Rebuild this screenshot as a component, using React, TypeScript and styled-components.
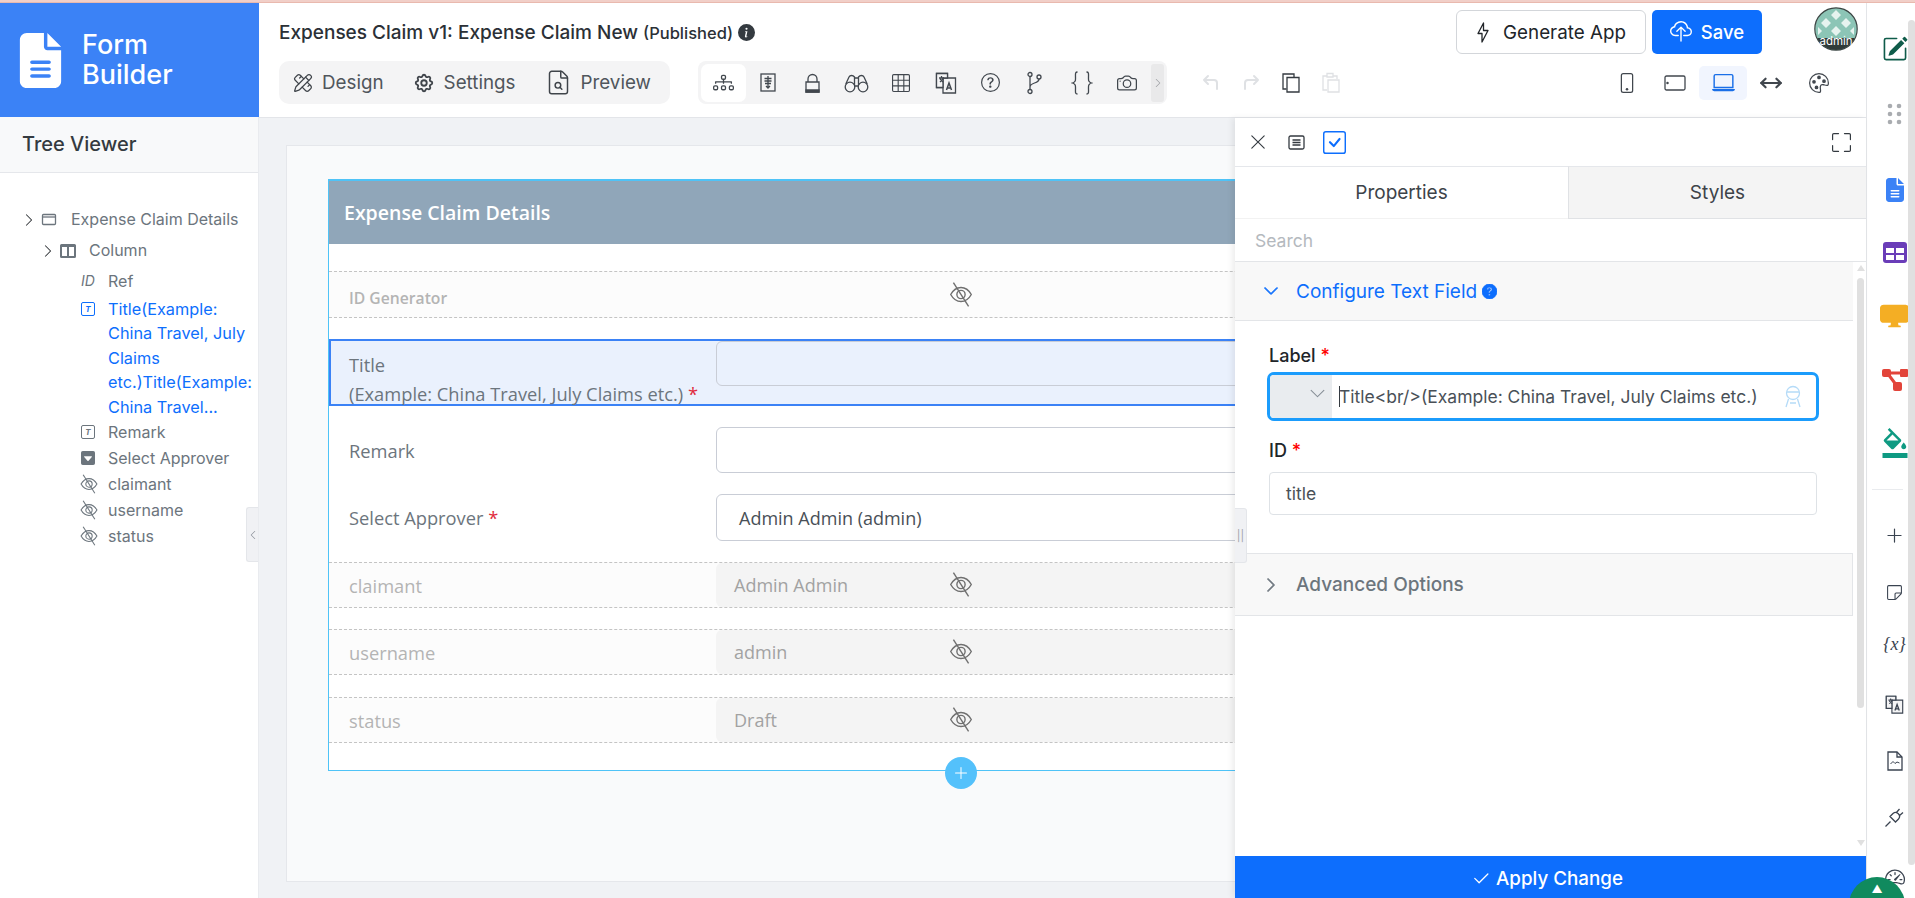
import React from 'react';
import styled, { createGlobalStyle } from 'styled-components';
import { FileSearch, PencilRuler } from 'lucide-react';
import {
  BsCamera,
  BsCaretDownSquareFill,
  BsCheck2,
  BsCheckSquare,
  BsChevronDown,
  BsChevronLeft,
  BsChevronRight,
  BsDiagram3,
  BsDisplayFill,
  BsFullscreen,
  BsGrid3X3,
  BsInfoCircleFill,
  BsLaptop,
  BsPalette,
  BsPencilSquare,
  BsPhone,
  BsPlusLg,
  BsQuestionCircle,
  BsQuestionCircleFill,
  BsSpeedometer2,
  BsSticky,
  BsXLg,
  BsCloudUpload,
} from 'react-icons/bs';
import { TbArrowsHorizontal, TbCornerUpLeft, TbCornerUpRight, TbSettings } from 'react-icons/tb';
import { MdFormatColorFill } from 'react-icons/md';
import { FaFileLines } from 'react-icons/fa6';

const GlobalStyle = createGlobalStyle`
  html, body {
    margin: 0;
    padding: 0;
    background: #fff;
  }
  body {
    font-family: Inter, "Liberation Sans", sans-serif;
    color: #212529;
    overflow: hidden;
  }
  * {
    box-sizing: border-box;
  }
`;

const Page = styled.div`
  position: relative;
  width: 1915px;
  height: 898px;
  overflow: hidden;
  display: flex;
  flex-direction: column;
`;

const TopLine = styled.div`
  height: 3px;
  flex: none;
  background: #f1cfc8;
  border-bottom: 1px solid #e9b9ae;
`;

const Shell = styled.div`
  flex: 1;
  min-height: 0;
  display: flex;
`;

const LeftColumn = styled.aside`
  width: 259px;
  flex: none;
  display: flex;
  flex-direction: column;
  position: relative;
  border-right: 1px solid #e9ebef;
`;

const Logo = styled.div`
  height: 114px;
  margin-right: -1px;
  flex: none;
  background: #3b82f6;
  color: #fff;
  display: flex;
  align-items: center;
  gap: 14px;
  padding-left: 13px;
  font-size: 27px;
  font-weight: 500;
  line-height: 30px;
  svg {
    color: #fff;
  }
`;

const TreeHeader = styled.div`
  height: 56px;
  flex: none;
  padding: 0 0 2px 22px;
  background: #f8f9fa;
  border-bottom: 1px solid #e5e7eb;
  display: flex;
  align-items: center;
  font-size: 20px;
  font-weight: 500;
  color: #343a40;
`;

const Tree = styled.div`
  padding-top: 31px;
  display: flex;
  flex-direction: column;
`;

const TreeRow = styled.div<{ $depth: number; $tall?: boolean; $active?: boolean }>`
  display: flex;
  align-items: ${(p) => (p.$active ? 'flex-start' : 'center')};
  min-height: ${(p) => (p.$tall ? 31 : 26)}px;
  padding-left: ${(p) => p.$depth}px;
  font-size: 16px;
  line-height: 24.4px;
  color: ${(p) => (p.$active ? '#0d6efd' : '#6c757d')};
`;

const TreeCaret = styled.span`
  width: 19px;
  flex: none;
  display: flex;
  color: #212529;
`;

const TreeIcon = styled.span<{ $width: number }>`
  width: ${(p) => p.$width}px;
  height: 24px;
  flex: none;
  display: flex;
  align-items: center;
`;

const TreeLabel = styled.span`
  width: 149px;
  flex: none;
  font-size: 16.3px;
`;

const IdMark = styled.span`
  font-style: italic;
  font-size: 14px;
`;

const TextBox = styled.span`
  width: 14px;
  height: 14px;
  border: 1.5px solid currentColor;
  border-radius: 2px;
  display: flex;
  align-items: center;
  justify-content: center;
  font-size: 8px;
  font-style: italic;
  font-weight: 700;
  line-height: 1;
`;

const CollapseTab = styled.div`
  position: absolute;
  right: 0;
  top: 504px;
  width: 12px;
  height: 55px;
  background: #f0f1f4;
  border: 1px solid #e4e6ea;
  border-right: none;
  border-radius: 3px 0 0 3px;
  color: #8a9099;
  display: flex;
  align-items: center;
  justify-content: center;
`;

const Center = styled.div`
  flex: 1;
  min-width: 0;
  display: flex;
  flex-direction: column;
`;

const Header = styled.header`
  height: 115px;
  flex: none;
  background: #fff;
  border-bottom: 1px solid #e3e5e9;
  padding-left: 20px;
  display: flex;
  flex-direction: column;
`;

const HeaderTop = styled.div`
  height: 58px;
  flex: none;
  display: flex;
  align-items: center;
`;

const Title = styled.h1`
  margin: 0;
  flex: 1;
  display: flex;
  align-items: center;
  gap: 5px;
  font-size: 19px;
  font-weight: 500;
  color: #2b3036;
  small {
    font-size: 16.5px;
    font-weight: 500;
  }
`;

const GenerateButton = styled.button`
  width: 190px;
  height: 44px;
  display: flex;
  align-items: center;
  justify-content: center;
  gap: 13px;
  background: #fff;
  border: 1px solid #d3d6da;
  border-radius: 6px;
  font: 400 18.8px Inter, sans-serif;
  color: #212529;
`;

const SaveButton = styled.button`
  width: 110px;
  height: 44px;
  margin-left: 6px;
  display: flex;
  align-items: center;
  justify-content: center;
  gap: 9px;
  background: #0d6efd;
  border: none;
  border-radius: 5px;
  font: 500 18.5px Inter, sans-serif;
  color: #fff;
`;

const AvatarWrap = styled.div`
  width: 44px;
  height: 44px;
  margin: 0 8px 7px 52px;
  display: flex;
`;

const HeaderBottom = styled.div`
  height: 43px;
  flex: none;
  display: flex;
  align-items: center;
`;

const ModeTabs = styled.div`
  width: 391px;
  height: 43px;
  background: #f4f4f5;
  border-radius: 10px;
  display: flex;
  align-items: center;
  padding-left: 14px;
  gap: 29px;
`;

const ModeTab = styled.span`
  display: flex;
  align-items: center;
  gap: 9px;
  font-size: 18.8px;
  color: #50565c;
  svg {
    color: #3f444a;
  }
`;

const ToolStrip = styled.div`
  margin-left: 28px;
  width: 469px;
  height: 43px;
  background: #f4f4f5;
  border-radius: 8px;
  padding: 3px;
  display: flex;
  align-items: center;
`;

const ToolButton = styled.span<{ $active?: boolean; $shift?: number }>`
  width: 44.5px;
  height: 38px;
  flex: none;
  margin-left: ${(p) => p.$shift ?? 0}px;
  display: flex;
  align-items: center;
  justify-content: center;
  border-radius: 7px;
  background: ${(p) => (p.$active ? '#fff' : 'transparent')};
  color: #41474e;
`;

const ToolMore = styled.span`
  margin-left: auto;
  width: 13px;
  height: 38px;
  background: #e9e9ea;
  border-radius: 3px;
  display: flex;
  align-items: center;
  justify-content: center;
  color: #9a9da1;
`;

const HistoryGroup = styled.div`
  margin-left: 24px;
  display: flex;
  align-items: center;
`;

const HistoryButton = styled.span<{ $muted?: boolean }>`
  width: 40px;
  display: flex;
  justify-content: center;
  color: ${(p) => (p.$muted ? '#dfe1e4' : '#343a40')};
`;

const DeviceGroup = styled.div`
  margin-left: auto;
  margin-right: 23px;
  display: flex;
  align-items: center;
`;

const DeviceButton = styled.span<{ $active?: boolean }>`
  width: 48px;
  height: 34px;
  display: flex;
  align-items: center;
  justify-content: center;
  border-radius: 5px;
  background: ${(p) => (p.$active ? '#f1f5fe' : 'transparent')};
  color: ${(p) => (p.$active ? '#1a6fe8' : '#41474e')};
`;

const Workspace = styled.main`
  flex: 1;
  min-height: 0;
  position: relative;
  background: #f0f2f5;
  padding: 27px 0 0 27px;
`;

const Canvas = styled.div`
  width: 1350px;
  height: 737px;
  background: #f9fafb;
  border: 1px solid #e5e7eb;
  padding: 33px 41px;
  font-family: "Open Sans", "Liberation Sans", sans-serif;
`;

const FormBox = styled.div`
  position: relative;
  width: 1266px;
  height: 592px;
  background: #fff;
  border: 1px solid #4fc3f7;
  border-top-width: 2px;
`;

const FormHeading = styled.div`
  height: 63px;
  background: #90a6b9;
  color: #fff;
  display: flex;
  align-items: center;
  padding-left: 15px;
  font-size: 19.5px;
  font-weight: 600;
  margin-bottom: 27px;
`;

const Row = styled.div<{ $hidden?: boolean; $selected?: boolean; $height: number; $after?: number }>`
  position: relative;
  height: ${(p) => p.$height}px;
  margin-bottom: ${(p) => p.$after ?? 21}px;
  padding-top: ${(p) => (p.$selected ? 2 : 0)}px;
  display: flex;
  font-size: 18px;
  color: ${(p) => (p.$hidden ? '#b4b4b4' : '#6c757d')};
  background: ${(p) => (p.$selected ? '#eaf1fd' : p.$hidden ? '#fcfcfc' : 'transparent')};
  border-top: ${(p) => (p.$hidden ? '1px dashed #c4c4c4' : 'none')};
  border-bottom: ${(p) => (p.$hidden ? '1px dashed #c4c4c4' : 'none')};
  box-shadow: ${(p) => (p.$selected ? 'inset 2px 2px 0 #3b82f6, inset 0 -2px 0 #3b82f6' : 'none')};
`;

const RowLabel = styled.label<{ $small?: boolean; $stacked?: boolean }>`
  width: 387px;
  flex: none;
  padding-left: 20px;
  padding-top: ${(p) => (p.$stacked ? 10 : p.$small ? 6 : 1)}px;
  display: flex;
  align-items: center;
  font-size: ${(p) => (p.$small ? 15.7 : 18.3)}px;
  font-weight: ${(p) => (p.$small ? 600 : 400)};
  line-height: ${(p) => (p.$stacked ? 29 : 24)}px;
  white-space: nowrap;
  em {
    color: #e02b3c;
    font-style: normal;
  }
`;

const Field = styled.div<{ $readonly?: boolean; $height?: number }>`
  flex: 1;
  height: ${(p) => (p.$height ? `${p.$height}px` : '100%')};
  border: ${(p) => (p.$readonly ? 'none' : '1px solid #c9cdd6')};
  border-radius: 6px 0 0 6px;
  background: ${(p) => (p.$readonly ? '#f4f4f4' : 'transparent')};
  padding-left: ${(p) => (p.$readonly ? 18 : 22)}px;
  display: flex;
  align-items: center;
  color: ${(p) => (p.$readonly ? '#a2a2a2' : '#495057')};
`;

const HiddenMark = styled.span`
  position: absolute;
  left: 619px;
  top: 50%;
  transform: translateY(-52%);
  display: flex;
  color: #707070;
`;

const AddButton = styled.span`
  position: absolute;
  left: 616px;
  bottom: -19px;
  width: 32px;
  height: 32px;
  border-radius: 50%;
  background: #54c1fb;
  color: #fff;
  display: flex;
  align-items: center;
  justify-content: center;
`;

const Panel = styled.section`
  position: absolute;
  top: 0;
  right: 0;
  bottom: 0;
  width: 631px;
  background: #fff;
  box-shadow: -3px 0 6px rgba(0, 0, 0, 0.07);
  display: flex;
  flex-direction: column;
`;

const DragHandle = styled.span`
  position: absolute;
  left: 0;
  top: 390px;
  width: 12px;
  height: 55px;
  background: #f0f1f4;
  border: 1px solid #e4e6ea;
  border-left: none;
  border-radius: 0 3px 3px 0;
  display: flex;
  align-items: center;
  justify-content: center;
  color: #a0a4aa;
  font-size: 11px;
  z-index: 1;
`;

const PanelTools = styled.div`
  height: 48px;
  flex: none;
  display: flex;
  align-items: center;
  padding: 0 15px 0 4px;
  color: #343a40;
`;

const PanelTool = styled.span<{ $active?: boolean }>`
  width: 38px;
  display: flex;
  justify-content: center;
  color: ${(p) => (p.$active ? '#0d6efd' : '#343a40')};
`;

const ExpandTool = styled.span`
  margin-left: auto;
  display: flex;
`;

const PanelTabs = styled.div`
  height: 53px;
  flex: none;
  display: flex;
`;

const PanelTab = styled.div<{ $active?: boolean; $width: number }>`
  width: ${(p) => p.$width}px;
  display: flex;
  align-items: center;
  justify-content: center;
  font-size: 19px;
  color: #3d4349;
  background: ${(p) => (p.$active ? '#fff' : '#f4f4f4')};
  border-top: 1px solid #e5e7eb;
  border-bottom: ${(p) => (p.$active ? '1px solid #f2f2f2' : '1px solid #e0e2e5')};
  border-left: ${(p) => (p.$active ? 'none' : '1px solid #e0e2e5')};
`;

const PanelSearch = styled.div`
  height: 43px;
  flex: none;
  display: flex;
  align-items: center;
  padding-left: 20px;
  font-size: 17.5px;
  color: #b4b9be;
  border-bottom: 1px solid #e3e5e8;
`;

const PanelBody = styled.div`
  flex: 1;
  min-height: 0;
  display: flex;
`;

const Sections = styled.div`
  width: 618px;
  flex: none;
`;

const SectionHead = styled.div<{ $open?: boolean }>`
  height: ${(p) => (p.$open ? 59 : 63)}px;
  background: #f8f8f8;
  display: flex;
  align-items: center;
  padding-left: 28px;
  gap: 17px;
  font-size: 19px;
  font-weight: ${(p) => (p.$open ? 400 : 500)};
  color: ${(p) => (p.$open ? '#0d6efd' : '#6c757d')};
  border-top: ${(p) => (p.$open ? 'none' : '1px solid #e3e5e8')};
  border-bottom: 1px solid #e3e5e8;
  border-right: ${(p) => (p.$open ? 'none' : '1px solid #e3e5e8')};
  svg {
    flex: none;
    stroke: currentColor;
    stroke-width: 0.8px;
  }
`;

const HeadText = styled.span`
  display: flex;
  align-items: center;
  gap: 5px;
`;

const SectionBody = styled.div`
  height: 232px;
  padding: 23px 36px 0 34px;
`;

const FieldLabel = styled.div`
  height: 24px;
  margin-bottom: 4px;
  font-size: 18px;
  font-weight: 500;
  line-height: 24px;
  color: #212529;
  em {
    color: #f00;
    font-style: normal;
  }
`;

const FocusInput = styled.div`
  height: 49px;
  margin: 0 -2px 18px;
  border: 3px solid #1b9cfc;
  border-radius: 7px;
  display: flex;
  align-items: stretch;
  overflow: hidden;
`;

const PrefixSelect = styled.span`
  width: 62px;
  flex: none;
  background: #e9ecef;
  color: #868e96;
  display: flex;
  justify-content: flex-end;
  padding: 10px 6px 0 0;
`;

const InputText = styled.span`
  flex: 1;
  min-width: 0;
  padding-left: 7px;
  display: flex;
  align-items: center;
  font-size: 17.5px;
  white-space: nowrap;
  color: #495057;
`;

const Caret = styled.span`
  width: 1px;
  height: 21px;
  margin-right: -1px;
  background: #343a40;
`;

const InputIcon = styled.span`
  width: 46px;
  flex: none;
  display: flex;
  align-items: center;
  justify-content: center;
  color: #b5dbf8;
`;

const PlainInput = styled.div`
  height: 43px;
  margin-top: 9px;
  border: 1px solid #dee2e6;
  border-radius: 4px;
  padding-left: 16px;
  display: flex;
  align-items: center;
  font-size: 17.5px;
  color: #495057;
`;

const ScrollGutter = styled.div`
  flex: 1;
  position: relative;
  padding: 16px 2px 0 4px;
  display: flex;
  flex-direction: column;
  align-items: stretch;
  &::before {
    content: '';
    position: absolute;
    left: 4px;
    top: 3px;
    border: 4px solid transparent;
    border-top: none;
    border-bottom: 6px solid #e0e0e0;
  }
  &::after {
    content: '';
    position: absolute;
    left: 4px;
    top: 578px;
    border: 4px solid transparent;
    border-bottom: none;
    border-top: 6px solid #e0e0e0;
  }
`;

const ScrollThumb = styled.span<{ $height: number }>`
  height: ${(p) => p.$height}px;
  background: #e0e0e0;
  border-radius: 5px;
`;

const ApplyBar = styled.div`
  height: 42px;
  flex: none;
  padding: 3px 7px 0 0;
  background: #0d6efd;
  color: #fff;
  display: flex;
  align-items: center;
  justify-content: center;
  gap: 5px;
  font-size: 18.8px;
  font-weight: 500;
`;

const Rail = styled.nav`
  width: 49px;
  flex: none;
  display: flex;
  border-left: 1px solid #e3e5e8;
`;

const RailItems = styled.div`
  width: 41px;
  flex: none;
  overflow: hidden;
  padding-left: 14px;
  display: flex;
  flex-direction: column;
  align-items: center;
`;

const RailItem = styled.span<{ $top: number; $color?: string }>`
  margin-top: ${(p) => p.$top}px;
  height: 30px;
  flex: none;
  display: flex;
  align-items: center;
  justify-content: center;
  color: ${(p) => p.$color ?? '#3a4350'};
`;

const RailDivider = styled.span`
  margin: 31px 0 0 -14px;
  width: 31px;
  height: 1px;
  flex: none;
  background: #e9ebee;
`;

const RailVariable = styled.span`
  font-family: "Liberation Serif", serif;
  font-style: italic;
  font-size: 18px;
  white-space: nowrap;
`;

const RailScroll = styled.div`
  flex: 1;
  padding-top: 17px;
  display: flex;
  flex-direction: column;
`;

const ChatBubble = styled.span`
  position: absolute;
  left: 1849px;
  top: 877px;
  width: 56px;
  height: 56px;
  border-radius: 50%;
  background: #108a5e;
  color: #fff;
  display: flex;
  justify-content: center;
  padding-top: 5px;
  font-size: 11px;
`;

const Stroke = styled.svg`
  fill: none;
  stroke: currentColor;
  stroke-width: 1.3;
  flex: none;
`;

const Solid = styled.svg`
  flex: none;
`;

const EyeOff = ({ size = 26, weight = 2.2 }: { size?: number; weight?: number }) => (
  <Stroke width={size} height={size} viewBox="0 0 24 24" strokeWidth={weight}>
    <path d="M2.500 12C5 7.500 8 5.500 12 5.500s7 2 9.500 6.500c-2.500 4.500-5.500 6.500-9.500 6.500s-7-2-9.500-6.500z" />
    <circle cx="12" cy="12" r="3.800" />
    <path d="M5 1l14 22" />
  </Stroke>
);

const SectionGlyph = () => (
  <Stroke width="18" height="14" viewBox="0 0 18 14">
    <rect x="1.500" y="1.500" width="13" height="10" rx="1" />
    <path d="M1.500 4h13" />
  </Stroke>
);

const ColumnGlyph = () => (
  <Solid width="16" height="14" viewBox="0 0 16 14">
    <path
      fill="currentColor"
      fillRule="evenodd"
      d="M1.500 0h13A1.500 1.500 0 0 1 16 1.500v11a1.500 1.500 0 0 1-1.500 1.500h-13A1.500 1.500 0 0 1 0 12.500v-11A1.500 1.500 0 0 1 1.500 0zM2 3v9h5V3zm7 0v9h5V3z"
    />
  </Solid>
);

const TreeDocGlyph = () => (
  <Stroke width="16" height="19" viewBox="0 0 16 19">
    <rect x="1" y="1" width="14" height="17" />
    <path d="M8 3v11M4.500 5.500h7M4.500 8h7M5 10.500h6M6 13l2 2 2-2" />
  </Stroke>
);

const LockGlyph = () => (
  <Stroke width="15" height="20" viewBox="0 0 15 20">
    <path d="M3 9V6a4.500 4.500 0 0 1 9 0v3" />
    <path d="M1 9h13v10H1z" />
    <path d="M1 17h13v2H1z" fill="currentColor" />
  </Stroke>
);

const BinocularsGlyph = () => (
  <Stroke width="25" height="20" viewBox="0 0 25 20" strokeWidth="1.400">
    <circle cx="6" cy="14" r="4.800" />
    <circle cx="19" cy="14" r="4.800" />
    <path d="M10.500 13h4M1.800 11L5 4c1-2 4-2 5.500 0v8M23.200 11L20 4c-1-2-4-2-5.500 0v8M10.500 5h4" />
  </Stroke>
);

const TranslateGlyph = ({ size = 22 }: { size?: number }) => (
  <Stroke width={size} height={size} viewBox="0 0 22 22">
    <path d="M1.500 1.500h11v14h-11z" />
    <path d="M8 6h12.500v15H8z" fill="#f4f4f5" />
    <path d="M1.500 1.500h11v4.500H8v9.500H1.500z" fill="#f4f4f5" />
    <path d="M4 6h5M6.500 4v2M5 10l3-3M5 7l3 3" />
    <path d="M11.500 18l2.500-7 2.500 7M12.500 16h3" strokeWidth="1.500" />
  </Stroke>
);

const BranchGlyph = () => (
  <Stroke width="17" height="24" viewBox="0 0 17 24">
    <circle cx="4" cy="3.500" r="2" />
    <circle cx="4" cy="20.500" r="2" />
    <circle cx="13" cy="6" r="2" />
    <path d="M4 5.500v13M13 8c0 5-9 3-9 8" />
  </Stroke>
);

const BracesGlyph = () => (
  <Stroke width="22" height="24" viewBox="0 0 22 24">
    <path d="M6.500 1C4 1 4.500 3 4.500 6s.5 5-3 6c3.500 1 3 3 3 6s-.5 5 2 5" />
    <path d="M15.500 1c2.500 0 2 2 2 5s-.5 5 3 6c-3.500 1-3 3-3 6s.5 5-2 5" />
  </Stroke>
);

const CopyGlyph = () => (
  <Stroke width="18" height="20" viewBox="0 0 18 20" strokeWidth="1.600">
    <path d="M4.500 16H1V1h11v3.500" />
    <path d="M5 4.500h12V19H5z" />
  </Stroke>
);

const PasteGlyph = () => (
  <Stroke width="18" height="21" viewBox="0 0 18 21" strokeWidth="1.600">
    <path d="M5 18H1V4h4M11 4h4v3" />
    <path d="M5 1.500h6V5H5zM6 8h11v12H6z" />
  </Stroke>
);

const TabletGlyph = () => (
  <Stroke width="22" height="16" viewBox="0 0 22 16" strokeWidth="1.400">
    <rect x="1" y="1" width="20" height="14" rx="1.500" />
    <circle cx="3.500" cy="8" r="0.600" fill="currentColor" />
  </Stroke>
);

const BoltGlyph = () => (
  <Stroke width="14" height="21" viewBox="0 0 14 21" strokeWidth="1.500" strokeLinejoin="round">
    <path d="M7.500 1L2 11.500h4V20l6-11.500H7.500z" />
  </Stroke>
);

const FormatGlyph = () => (
  <Stroke width="17" height="15" viewBox="0 0 17 15" strokeWidth="1.400">
    <rect x="1" y="1" width="15" height="13" rx="1.500" />
    <path d="M4.500 5h8M4.500 7.500h8M4.500 10h8" />
  </Stroke>
);

const AgentGlyph = () => (
  <Stroke width="18" height="23" viewBox="0 0 18 23" strokeWidth="2">
    <circle cx="9" cy="8" r="6.500" />
    <path d="M3 7h12M4.500 14L2 22M13.500 14l2.500 8M6 18h6" />
  </Stroke>
);

const TableGlyph = () => (
  <Solid width="24" height="21" viewBox="0 0 24 21">
    <rect width="24" height="21" rx="3" fill="#6a3db8" />
    <path fill="#fff" d="M3 6h8v5H3zM13 6h8v5h-8zM3 13h8v5H3zM13 13h8v5h-8z" />
  </Solid>
);

const ShareGlyph = () => (
  <Solid width="26" height="22" viewBox="0 0 26 22">
    <path fill="none" stroke="#e2443a" strokeWidth="3" d="M5 4h18M6 5l9 12" />
    <rect y="0" width="9" height="8" rx="2" fill="#e2443a" />
    <rect x="18" y="0" width="8" height="8" rx="1" fill="#e2443a" />
    <rect x="11" y="13" width="9" height="9" rx="2" fill="#e2443a" />
  </Solid>
);

const FileChartGlyph = () => (
  <Stroke width="16" height="20" viewBox="0 0 16 20" strokeWidth="1.500">
    <path d="M1 1h9l5 5v13H1z" />
    <path d="M10 1v5h5" />
    <path d="M3.500 13l2.500-2.500 2 2 2-1.500 2.500 1" strokeWidth="1" />
  </Stroke>
);

const PlugGlyph = () => (
  <Stroke width="22" height="22" viewBox="0 0 22 22" strokeWidth="1.500">
    <path d="M1.500 20.500L6.500 15.500M6 10.500l5.500 5.500 3-3a3.900 3.900 0 0 0-5.500-5.500zM12 7l3.500-4M15 10l4-3.500" />
  </Stroke>
);

const Avatar = () => (
  <svg width="44" height="44" viewBox="0 0 44 44">
    <defs>
      <clipPath id="avatar-clip">
        <circle cx="22" cy="22" r="21" />
      </clipPath>
    </defs>
    <g clipPath="url(#avatar-clip)">
      <rect width="44" height="44" fill="#8cc5b6" />
      <path
        fill="#e6f3ef"
        d="M22 3l5 5-5 5-5-5zM12 11l5 5-5 5-5-5zM32 11l5 5-5 5-5-5zM22 19l5 5-5 5-5-5zM4 20l4 4-4 4zM40 20v8l-4-4z"
      />
      <rect y="31" width="44" height="13" fill="#2f3b39" />
    </g>
    <circle cx="22" cy="22" r="21.200" fill="none" stroke="#3a4543" strokeWidth="1.200" />
    <text x="22" y="38" textAnchor="middle" fontSize="11.500" fontFamily="Inter, sans-serif" fill="#fff">
      admin
    </text>
  </svg>
);

const App = () => {
  const claimRows = [
    { label: 'claimant', value: 'Admin Admin', after: 21 },
    { label: 'username', value: 'admin', after: 22 },
    { label: 'status', value: 'Draft', after: 0 },
  ];
  const railItems: [number, string | undefined, React.ReactNode][] = [
    [31, '#0f5c4a', <BsPencilSquare size={26} />],
    [35, '#a9acb0', <svg width="16" height="22" viewBox="0 0 16 22"><g fill="currentColor"><circle cx="3" cy="3" r="2.300" /><circle cx="12" cy="3" r="2.300" /><circle cx="3" cy="11" r="2.300" /><circle cx="12" cy="11" r="2.300" /><circle cx="3" cy="19" r="2.300" /><circle cx="12" cy="19" r="2.300" /></g></svg>],
    [46, '#3b82f6', <FaFileLines size={24} />],
    [32, undefined, <TableGlyph />],
    [33, '#f4ae24', <BsDisplayFill size={29} />],
    [35, undefined, <ShareGlyph />],
    [33, '#0e9a82', <MdFormatColorFill size={30} />],
  ];
  const railTools: [number, React.ReactNode][] = [
    [30, <BsPlusLg size={19} />],
    [27, <BsSticky size={17} />],
    [22, <RailVariable>{'{x}'}</RailVariable>],
    [30, <TranslateGlyph size={19} />],
    [27, <FileChartGlyph />],
    [26, <PlugGlyph />],
    [30, <BsSpeedometer2 size={20} />],
  ];

  return (
    <Page>
      <GlobalStyle />
      <TopLine />
      <Shell>
        <LeftColumn>
          <Logo>
            <FaFileLines size={55} />
            <span>
              Form
              <br />
              Builder
            </span>
          </Logo>
          <TreeHeader>Tree Viewer</TreeHeader>
          <Tree>
            <TreeRow $depth={22} $tall>
              <TreeCaret><BsChevronRight size={14} /></TreeCaret>
              <TreeIcon $width={30}><SectionGlyph /></TreeIcon>
              Expense Claim Details
            </TreeRow>
            <TreeRow $depth={41} $tall>
              <TreeCaret><BsChevronRight size={14} /></TreeCaret>
              <TreeIcon $width={29}><ColumnGlyph /></TreeIcon>
              Column
            </TreeRow>
            <TreeRow $depth={81} $tall>
              <TreeIcon $width={27}><IdMark>ID</IdMark></TreeIcon>
              Ref
            </TreeRow>
            <TreeRow $depth={81} $active>
              <TreeIcon $width={27}><TextBox>T</TextBox></TreeIcon>
              <TreeLabel>Title(Example: China Travel, July Claims etc.)Title(Example: China Travel...</TreeLabel>
            </TreeRow>
            <TreeRow $depth={81}>
              <TreeIcon $width={27}><TextBox>T</TextBox></TreeIcon>
              Remark
            </TreeRow>
            <TreeRow $depth={81}>
              <TreeIcon $width={27}><BsCaretDownSquareFill size={14} /></TreeIcon>
              Select Approver
            </TreeRow>
            {['claimant', 'username', 'status'].map((name) => (
              <TreeRow key={name} $depth={79}>
                <TreeIcon $width={29}><EyeOff size={20} weight={3.2} /></TreeIcon>
                {name}
              </TreeRow>
            ))}
          </Tree>
          <CollapseTab><BsChevronLeft size={10} /></CollapseTab>
        </LeftColumn>

        <Center>
          <Header>
            <HeaderTop>
              <Title>
                <span>
                  Expenses Claim v1: Expense Claim New <small>(Published)</small>
                </span>
                <BsInfoCircleFill size={17} color="#343a40" />
              </Title>
              <GenerateButton><BoltGlyph />Generate App</GenerateButton>
              <SaveButton><BsCloudUpload size={22} />Save</SaveButton>
              <AvatarWrap><Avatar /></AvatarWrap>
            </HeaderTop>
            <HeaderBottom>
              <ModeTabs>
                <ModeTab><PencilRuler size={20} strokeWidth={1.5} />Design</ModeTab>
                <ModeTab><TbSettings size={22} />Settings</ModeTab>
                <ModeTab><FileSearch size={27} strokeWidth={1.3} />Preview</ModeTab>
              </ModeTabs>
              <ToolStrip>
                <ToolButton $active><BsDiagram3 size={21} /></ToolButton>
                <ToolButton><TreeDocGlyph /></ToolButton>
                <ToolButton><LockGlyph /></ToolButton>
                <ToolButton><BinocularsGlyph /></ToolButton>
                <ToolButton><BsGrid3X3 size={18} /></ToolButton>
                <ToolButton><TranslateGlyph /></ToolButton>
                <ToolButton><BsQuestionCircle size={19} /></ToolButton>
                <ToolButton><BranchGlyph /></ToolButton>
                <ToolButton $shift={3}><BracesGlyph /></ToolButton>
                <ToolButton><BsCamera size={20} /></ToolButton>
                <ToolMore><BsChevronRight size={10} /></ToolMore>
              </ToolStrip>
              <HistoryGroup>
                <HistoryButton $muted><TbCornerUpLeft size={24} /></HistoryButton>
                <HistoryButton $muted><TbCornerUpRight size={24} /></HistoryButton>
                <HistoryButton><CopyGlyph /></HistoryButton>
                <HistoryButton $muted><PasteGlyph /></HistoryButton>
              </HistoryGroup>
              <DeviceGroup>
                <DeviceButton><BsPhone size={20} /></DeviceButton>
                <DeviceButton><TabletGlyph /></DeviceButton>
                <DeviceButton $active><BsLaptop size={23} /></DeviceButton>
                <DeviceButton><TbArrowsHorizontal size={26} /></DeviceButton>
                <DeviceButton><BsPalette size={20} /></DeviceButton>
              </DeviceGroup>
            </HeaderBottom>
          </Header>

          <Workspace>
            <Canvas>
              <FormBox>
                <FormHeading>Expense Claim Details</FormHeading>
                <Row $hidden $height={47}>
                  <RowLabel $small>ID Generator</RowLabel>
                  <HiddenMark><EyeOff /></HiddenMark>
                </Row>
                <Row $selected $height={67}>
                  <RowLabel $stacked>
                    <span>
                      Title
                      <br />
                      (Example: China Travel, July Claims etc.) <em>*</em>
                    </span>
                  </RowLabel>
                  <Field $height={45} />
                </Row>
                <Row $height={46}>
                  <RowLabel>Remark</RowLabel>
                  <Field />
                </Row>
                <Row $height={47}>
                  <RowLabel><span>Select Approver <em>*</em></span></RowLabel>
                  <Field>Admin Admin (admin)</Field>
                </Row>
                {claimRows.map((row) => (
                  <Row key={row.label} $hidden $height={46} $after={row.after}>
                    <RowLabel>{row.label}</RowLabel>
                    <Field $readonly>{row.value}</Field>
                    <HiddenMark><EyeOff /></HiddenMark>
                  </Row>
                ))}
                <AddButton><BsPlusLg size={16} /></AddButton>
              </FormBox>
            </Canvas>

            <Panel>
              <DragHandle>||</DragHandle>
              <PanelTools>
                <PanelTool><BsXLg size={18} /></PanelTool>
                <PanelTool><FormatGlyph /></PanelTool>
                <PanelTool $active><BsCheckSquare size={23} /></PanelTool>
                <ExpandTool><BsFullscreen size={19} /></ExpandTool>
              </PanelTools>
              <PanelTabs>
                <PanelTab $active $width={333}>Properties</PanelTab>
                <PanelTab $width={298}>Styles</PanelTab>
              </PanelTabs>
              <PanelSearch>Search</PanelSearch>
              <PanelBody>
                <Sections>
                  <SectionHead $open>
                    <BsChevronDown size={16} />
                    <HeadText>
                      Configure Text Field
                      <BsQuestionCircleFill size={15} />
                    </HeadText>
                  </SectionHead>
                  <SectionBody>
                    <FieldLabel>Label <em>*</em></FieldLabel>
                    <FocusInput>
                      <PrefixSelect><BsChevronDown size={17} /></PrefixSelect>
                      <InputText>
                        <Caret />
                        {'Title<br/>(Example: China Travel, July Claims etc.)'}
                      </InputText>
                      <InputIcon><AgentGlyph /></InputIcon>
                    </FocusInput>
                    <FieldLabel>ID <em>*</em></FieldLabel>
                    <PlainInput>title</PlainInput>
                  </SectionBody>
                  <SectionHead>
                    <BsChevronRight size={16} />
                    Advanced Options
                  </SectionHead>
                </Sections>
                <ScrollGutter><ScrollThumb $height={430} /></ScrollGutter>
              </PanelBody>
              <ApplyBar><BsCheck2 size={20} />Apply Change</ApplyBar>
            </Panel>
          </Workspace>
        </Center>

        <Rail>
          <RailItems>
            {railItems.map(([top, color, icon], i) => (
              <RailItem key={i} $top={top} $color={color}>{icon}</RailItem>
            ))}
            <RailDivider />
            {railTools.map(([top, icon], i) => (
              <RailItem key={i} $top={top}>{icon}</RailItem>
            ))}
          </RailItems>
          <RailScroll><ScrollThumb $height={845} /></RailScroll>
        </Rail>
      </Shell>
      <ChatBubble>▲</ChatBubble>
    </Page>
  );
};

export default App;
